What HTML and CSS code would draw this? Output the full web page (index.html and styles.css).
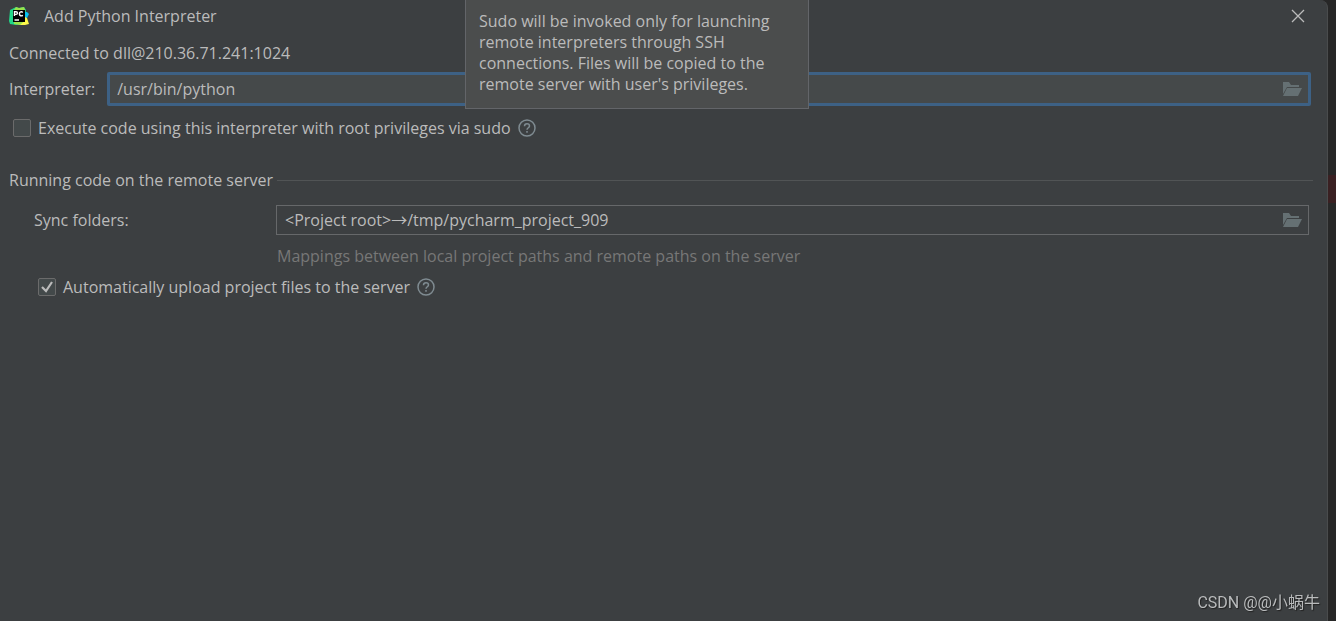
FILE: index.html
```html
<!DOCTYPE html>
<html lang="en">
<head>
<meta charset="utf-8">
<title>Add Python Interpreter</title>
<link rel="stylesheet" href="styles.css">
</head>
<body>
<svg class="defs" aria-hidden="true">
  <symbol id="folder" viewBox="0 0 20 16">
    <path d="M1 1h6l2 3h8v2H5L1 13z"/>
    <path d="M5 7h15l-4 8H1z"/>
  </symbol>
  <symbol id="help" viewBox="0 0 18 18">
    <circle cx="9" cy="9" r="8"/>
    <path d="M6.500 7.200C6.500 5.700 7.500 4.800 9 4.800s2.500.9 2.500 2.200c0 1.700-2.500 1.900-2.500 3.800M9 12v1.700"/>
  </symbol>
</svg>
<main class="dialog">
  <header class="titlebar">
    <svg class="logo" viewBox="0 0 20 20" aria-hidden="true">
      <path fill="#21d789" d="M1 4 7 1l3 1 5-1 2 3-1 14-9 1-6-1L0 15z"/>
      <path fill="#fcf84a" d="m10 19 5-4 1-6 2 3 2 6-4 1z"/>
      <path fill="#9be34a" d="m7 1 3 1 5-1 1 3H5zM5 16h9l-3 3-6-1z"/>
      <path fill="#07c3f2" d="m16 6 2 0 2 2-2 4-2-1z"/>
      <path fill="#000" d="M4 4h12v12H4z"/>
      <path fill="none" stroke="#fff" stroke-width="1.400" d="M5.500 10V5.700h1.600a1.300 1.300 0 0 1 0 2.700H5.500M13.800 6.400c-1.300-1.300-3.400-.6-3.400 1.400s2.100 2.700 3.400 1.400M5.500 14h4.500"/>
    </svg>
    <h1 class="title">Add Python Interpreter</h1>
    <button class="close" aria-label="Close"><svg viewBox="0 0 12 12"><path d="m0 0 12 12M12 0 0 12"/></svg></button>
  </header>
  <p class="status">Connected to dll@210.36.71.241:1024</p>
  <div class="row interpreter">
    <label for="interpreter">Interpreter:</label>
    <div class="field focused">
      <input id="interpreter" type="text" value="/usr/bin/python">
      <button class="browse" aria-label="Browse interpreter"><svg><use href="#folder"/></svg></button>
    </div>
  </div>
  <div class="row check">
    <input id="sudo" type="checkbox">
    <label for="sudo">Execute code using this interpreter with root privileges via sudo</label>
    <button class="help" aria-label="Help on sudo"><svg><use href="#help"/></svg></button>
  </div>
  <section class="remote">
    <h2 class="heading">Running code on the remote server</h2>
    <div class="sync">
      <label for="sync">Sync folders:</label>
      <div class="field">
        <input id="sync" type="text" value="&lt;Project root&gt;→/tmp/pycharm_project_909">
        <button class="browse" aria-label="Browse folders"><svg><use href="#folder"/></svg></button>
      </div>
      <p class="hint">Mappings between local project paths and remote paths on the server</p>
    </div>
    <div class="row check">
      <input id="upload" type="checkbox" checked>
      <label for="upload">Automatically upload project files to the server</label>
      <button class="help" aria-label="Help on upload"><svg><use href="#help"/></svg></button>
    </div>
  </section>
  <div class="tooltip" role="tooltip">Sudo will be invoked only for launching remote interpreters through SSH connections. Files will be copied to the remote server with user's privileges.</div>
</main>
<div class="edge"></div>
<div class="watermark">CSDN @@小蜗牛</div>
</body>
</html>
```
FILE: styles.css
```css
* { box-sizing: border-box; }
body {
  margin: 0;
  min-height: 100vh;
  display: flex;
  background: #272727;
  color: #bbbbbb;
  font: 16px/22px "Open Sans", "Noto Sans CJK SC", sans-serif;
}
h1, h2, p { margin: 0; font-size: 16px; font-weight: 400; }
button { padding: 0; border: 0; background: none; color: inherit; display: flex; }
.defs { position: absolute; width: 0; height: 0; }
.dialog {
  position: relative;
  flex: 1;
  padding: 0 18px 0 9px;
  background: #3c3f41;
  border-right: 1px solid #4a4c4d;
  border-top-right-radius: 8px;
}
.edge {
  width: 8px;
  background: linear-gradient(#3a2022, #3a2022) 0 175px / 8px 28px no-repeat;
}
.titlebar { display: flex; align-items: center; height: 32px; padding-right: 5px; }
.logo { width: 20px; height: 20px; }
.titlebar .title { flex: 1; margin-left: 15px; }
.close svg { width: 12px; height: 12px; fill: none; stroke: #bbbbbb; stroke-width: 1.3; overflow: visible; }
.status { margin: 10px 0 8px; }
.row { display: flex; align-items: center; }
.interpreter { gap: 12px; margin-right: -2px; }
.field {
  flex: 1;
  display: flex;
  align-items: center;
  height: 30px;
  padding: 0 6px 0 8px;
  border: 1px solid #66686a;
}
.field input {
  flex: 1;
  min-width: 0;
  padding: 0;
  border: 0;
  outline: 0;
  background: none;
  color: #bbbbbb;
  font: inherit;
}
.focused { height: 34px; padding-left: 7px; border: 3px solid #3d6185; border-radius: 2px; background: #45494a; }
.browse svg { width: 20px; height: 16px; fill: #657073; }
.check { padding-left: 4px; }
.check input {
  appearance: none;
  width: 18px;
  height: 18px;
  margin: 0 7px 0 0;
  border: 1px solid #6b6b6b;
  border-radius: 2px;
  background: #43494a;
}
.check input:checked {
  background: #43494a url("data:image/svg+xml,%3Csvg xmlns='http://www.w3.org/2000/svg' viewBox='0 0 16 16'%3E%3Cpath d='M3 8l4 4 6-9' fill='none' stroke='%23bbb' stroke-width='2.2'/%3E%3C/svg%3E") center / 16px 16px;
}
.help { margin-left: 7px; }
.help svg { width: 18px; height: 18px; fill: none; stroke: #7f8b91; stroke-width: 1.5; }
.interpreter + .check { margin-top: 11px; }
.remote { margin-top: 30px; }
.heading { display: flex; align-items: center; gap: 4px; }
.heading::after { content: ""; flex: 1; height: 1px; background: #515455; margin-right: -4px; }
.sync {
  display: grid;
  grid-template-columns: 242px 1fr;
  align-items: center;
  row-gap: 10px;
  margin: 14px 0 9px 25px;
}
.hint { grid-column: 2; padding-left: 1px; color: #777777; }
.remote .check { padding-left: 29px; }
.tooltip {
  position: absolute;
  top: -1px;
  left: 465px;
  width: 344px;
  padding: 11px 24px 13px 13px;
  border: 1px solid #636569;
  background: #4b4d4d;
  line-height: 21px;
}
.watermark {
  position: fixed;
  right: 16px;
  bottom: 7px;
  color: #b9bbbc;
  font: 16px/22px Roboto, "Noto Sans CJK SC", sans-serif;
  text-shadow: 1px 1px 1px #222222;
}
```
